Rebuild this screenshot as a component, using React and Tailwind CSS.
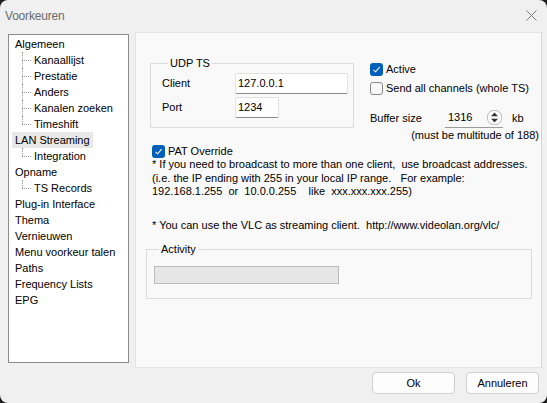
import { memo } from "react";

// --- tree data ---
const TREE = [
  { label: "Algemeen", children: ["Kanaallijst", "Prestatie", "Anders", "Kanalen zoeken", "Timeshift"] },
  { label: "LAN Streaming", selected: true, children: ["Integration"] },
  { label: "Opname", children: ["TS Records"] },
  { label: "Plug-in Interface" },
  { label: "Thema" },
  { label: "Vernieuwen" },
  { label: "Menu voorkeur talen" },
  { label: "Paths" },
  { label: "Frequency Lists" },
  { label: "EPG" },
];

const Connector = ({ last }) => (
  <div className="relative w-[12px] h-[16px] shrink-0">
    <div className={`absolute left-0 top-0 border-l border-dotted border-[#a0a0a0] ${last ? "h-[8px]" : "h-[16px]"}`}></div>
    <div className="absolute left-0 top-[8px] w-[9px] border-t border-dotted border-[#a0a0a0]"></div>
  </div>
);

const TreeView = () => (
  <div className="mt-[3px] h-[329px] w-[121px] border border-[#8c8c8c] bg-white pt-[1px]">
    {TREE.map((node) => (
      <div key={node.label}>
        <div className="h-[16px] flex items-center pl-[3px]">
          <span className={`px-[3px] leading-[16px] ${node.selected ? "bg-[#e8e8e8]" : ""}`}>{node.label}</span>
        </div>
        {node.children?.map((child, i) => (
          <div key={child} className="h-[16px] flex items-center pl-[13px]">
            <Connector last={i === node.children.length - 1} />
            <span className="leading-[16px]">{child}</span>
          </div>
        ))}
      </div>
    ))}
  </div>
);

const CheckBox = ({ checked, label, className = "" }) => (
  <div className={`flex items-center h-[16px] ${className}`}>
    {checked ? (
      <div className="w-[13px] h-[13px] rounded-[3px] bg-[#005fb8] flex items-center justify-center">
        <svg width="9" height="9" viewBox="0 0 9 9">
          <path d="M1.5 4.8 L3.6 6.8 L7.6 2.2" fill="none" stroke="white" strokeWidth="1.1" />
        </svg>
      </div>
    ) : (
      <div className="w-[13px] h-[13px] rounded-[3px] border border-[#8a8a8a] bg-[#f7f7f7]"></div>
    )}
    <span className="ml-[3px]">{label}</span>
  </div>
);

const TextBox = ({ value, className = "" }) => (
  <div className={`h-[21px] bg-white border border-[#e2e2e2] border-b-[#8a8a8a] rounded-[2px] flex items-center pl-[2px] ${className}`}>
    {value}
  </div>
);

const SpinArrows = () => (
  <svg width="15" height="15" viewBox="0 0 15 15">
    <rect x="0.5" y="0.5" width="14" height="14" rx="6" fill="#fdfdfd" stroke="#b8b8b8" />
    <path d="M4 6.2 L7.5 2.6 L11 6.2 Z" fill="#333" />
    <path d="M4 8.8 L7.5 12.4 L11 8.8 Z" fill="#333" />
  </svg>
);

const Button = ({ children, className = "" }) => (
  <button className={`h-[22px] rounded-[4px] border border-[#d0d0d0] bg-[#fdfdfd] text-[11px] text-black ${className}`}>
    {children}
  </button>
);

const App = () => {
  return (
    <div className="w-[547px] h-[403px] bg-[#1e1e1e] overflow-hidden font-['Liberation_Sans',Arial,sans-serif] text-[11px] text-black">
      <div className="w-full h-full rounded-[8px] bg-[#f0f0f0] flex flex-col">
        {/* Title bar */}
        <div className="h-[31px] shrink-0 flex items-center justify-between pl-[5px] pr-[10px]">
          <span className="text-[12px] text-[#6b6b6b] tracking-[-0.2px]">Voorkeuren</span>
          <svg width="11" height="11" viewBox="0 0 11 11">
            <path d="M0.5 0.5 L10.5 10.5 M10.5 0.5 L0.5 10.5" stroke="#7a7a7a" strokeWidth="1" />
          </svg>
        </div>

        {/* Body */}
        <div className="flex gap-[6px] pl-[8px] h-[337px] shrink-0">
          <TreeView />

          <div className="mt-[1px] w-[407px] h-[336px] bg-[#f9f9f9] border border-[#e4e4e4] border-r-[#d6d6d6]">
            {/* UDP + options */}
            <div className="flex items-start">
              <fieldset className="ml-[14px] mt-[24px] w-[204px] border border-[#dcdcdc] pl-[11px] pb-[9px]">
                <legend className="ml-[6px] px-[2px] leading-[13px]">UDP TS</legend>
                <div className="mt-[3px] flex items-center h-[21px]">
                  <span className="w-[73px]">Client</span>
                  <TextBox value="127.0.0.1" className="w-[113px]" />
                </div>
                <div className="mt-[3px] flex items-center h-[21px]">
                  <span className="w-[73px]">Port</span>
                  <TextBox value="1234" className="w-[44px]" />
                </div>
              </fieldset>

              <div className="ml-[16px] mt-[28px] flex-1 pr-[2px]">
                <CheckBox checked label="Active" />
                <CheckBox label="Send all channels (whole TS)" className="mt-[3px]" />
                <div className="mt-[12px] flex items-center h-[20px]">
                  <span className="w-[75px]">Buffer size</span>
                  <div className="w-[58px] h-[20px] border-b border-[#9a9a9a] flex items-center justify-between pl-[3px] pr-[1px]">
                    <span>1316</span>
                    <SpinArrows />
                  </div>
                  <span className="ml-[9px]">kb</span>
                </div>
                <div className="mt-[1px] text-right leading-[13px]">(must be multitude of 188)</div>
              </div>
            </div>

            {/* PAT override + notes */}
            <div className="pl-[16px]">
              <CheckBox checked label="PAT Override" className="mt-[1px]" />
              <div className="leading-[13.5px] mt-[-1px] whitespace-nowrap">
                <p>* If you need to broadcast to more than one client,&nbsp; use broadcast addresses.</p>
                <p>(i.e. the IP ending with 255 in your local IP range.&nbsp;&nbsp; For example:</p>
                <p>192.168.1.255&nbsp; or&nbsp; 10.0.0.255&nbsp;&nbsp;&nbsp; like&nbsp; xxx.xxx.xxx.255)</p>
              </div>
              <p className="mt-[20px] leading-[13px] whitespace-nowrap">* You can use the VLC as streaming client.&nbsp; http://www.videolan.org/vlc/</p>
            </div>

            {/* Activity */}
            <fieldset className="ml-[10px] mt-[11px] w-[386px] border border-[#dcdcdc] pl-[7px] pb-[14px]">
              <legend className="ml-[5px] px-[2px] leading-[13px]">Activity</legend>
              <div className="mt-[10px] w-[185px] h-[18px] bg-[#e6e6e6] border border-[#bcbcbc]"></div>
            </fieldset>
          </div>
        </div>

        {/* Footer */}
        <div className="flex justify-end gap-[11px] pt-[4px] pr-[8px]">
          <Button className="w-[83px]">Ok</Button>
          <Button className="w-[73px]">Annuleren</Button>
        </div>
      </div>
    </div>
  );
};

export default memo(App);
